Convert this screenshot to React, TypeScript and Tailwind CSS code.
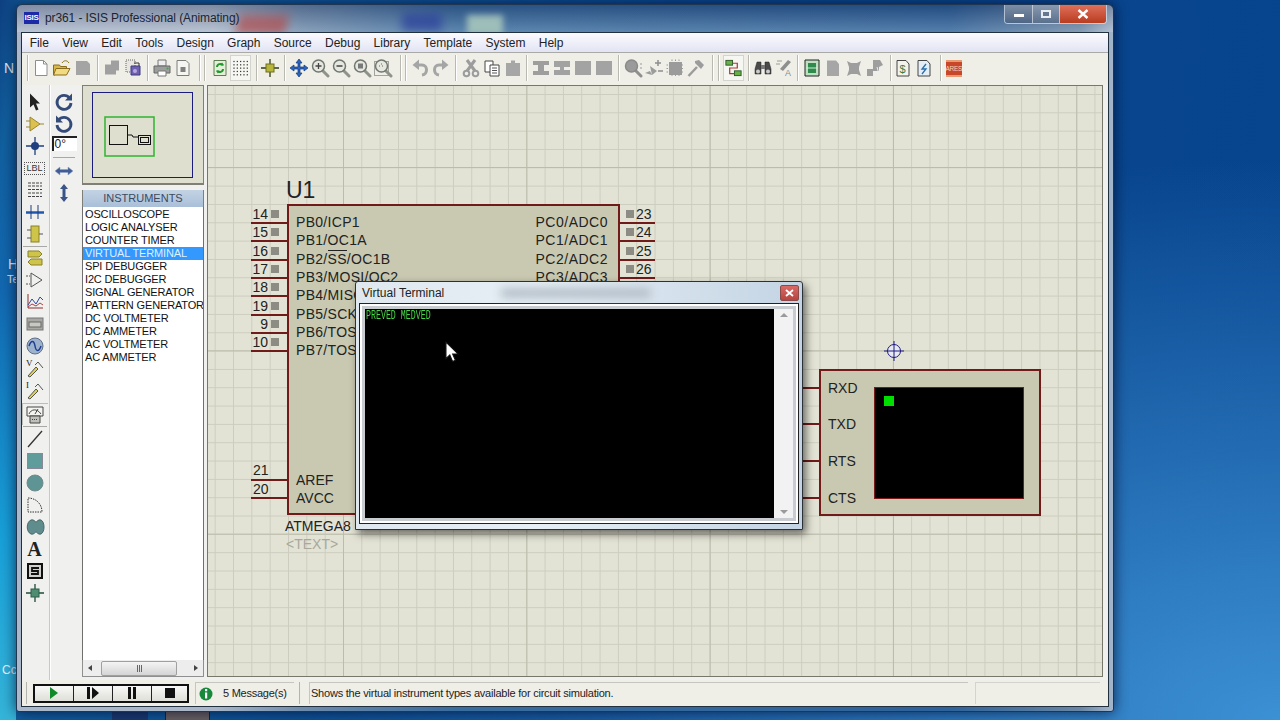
import React from "react";

const FONT = "[font-family:'Liberation_Sans',Arial,sans-serif]";

function Ic({ children, size = 20 }: { children: React.ReactNode; size?: number }) {
  return (
    <svg width={size} height={size} viewBox="0 0 20 20" className="block" fill="none">
      {children}
    </svg>
  );
}

function Mag({ inner, dotted, gray }: { inner?: React.ReactNode; dotted?: boolean; gray?: boolean }) {
  return (
    <Ic>
      {dotted && <rect x="1.5" y="3.5" width="14" height="14" stroke="#555" strokeDasharray="1 1" />}
      <line x1="12" y1="12" x2="18" y2="18" stroke={gray ? "#8f8f8f" : "#8e9488"} strokeWidth="3" strokeLinecap="round" />
      <circle cx="8.5" cy="8" r="6" fill={gray ? "#9a9a9a" : "#e6e8e0"} stroke={gray ? "#8a8a8a" : "#6f7770"} strokeWidth="1.5" />
      {inner}
    </Ic>
  );
}

const GrayDoc = () => (
  <Ic><path d="M3 3h11l3 3v11H3z" fill="#a4a4a4" /></Ic>
);

const Sep = ({ ml }: { ml: string }) => <div className={`${ml} w-[1px] h-[26px] bg-[#b9b9b2] shadow-[1px_0_0_#ffffff] shrink-0`} />;

const T = ({ children, sel }: { children: React.ReactNode; sel?: boolean }) => (
  <div className={`w-[21px] h-[26px] flex items-center justify-center shrink-0 ${sel ? "border border-[#d4d4ce] bg-[#f6f6f2]" : ""}`}>{children}</div>
);

const Group = ({ ml, children }: { ml: string; children: React.ReactNode }) => <div className={`flex ${ml}`}>{children}</div>;

function Toolbar() {
  return (
    <div className="h-[33px] flex items-center pb-[2px] bg-[#efefe8] border-t border-[#a9a9a6] shrink-0">
      <Sep ml="ml-[5px]" />
      <Group ml="ml-[2px]">
        <T><Ic><path d="M4.5 2.5h8l3.5 3.5v11.500h-11.500z" fill="#fff" stroke="#8d8d8d" /><path d="M12.500 2.500v3.500h3.500" stroke="#8d8d8d" /></Ic></T>
        <T><Ic><path d="M1.500 7h6l1 1.500h6v2H6l-3 6.500h-1.500z" fill="#d8b648" stroke="#8a6d1c" /><path d="M4 10.500h14l-3.500 6.500H1.500z" fill="#f2da80" stroke="#8a6d1c" /><path d="M10 5c2-3 5-3 7 0" stroke="#8a6d1c" /></Ic></T>
        <T><GrayDoc /></T>
      </Group>
      <Sep ml="ml-[4px]" />
      <Group ml="ml-[3px]">
        <T><Ic><path d="M9 2.500h8v10h-3v4H3v-10h6z" fill="#a0a0a0" /></Ic></T>
        <T><Ic><path d="M3 2h9v12H3z" fill="#e8e6e0" stroke="#666" strokeDasharray="1 1" /><path d="M8 8h9v9H8z" fill="#6e62b0" stroke="#3e3a7e" /><path d="M11 5h5v3" stroke="#333" /><circle cx="12" cy="13" r="2" fill="#b9a8e0" /></Ic></T>
      </Group>
      <Sep ml="ml-[4px]" />
      <Group ml="ml-[3px]">
        <T><Ic><path d="M6 2h8v6H6z" fill="#eee" stroke="#777" /><path d="M2 8h16v7H2z" fill="#9b9f9c" stroke="#666" /><path d="M6 13h8v5H6z" fill="#fff" stroke="#777" /><circle cx="15.500" cy="10.500" r="1" fill="#48a048" /></Ic></T>
        <T><Ic><path d="M4 2.500h9l3 3v12H4z" fill="#f5f5f1" stroke="#7c7c7c" /><rect x="7.500" y="9" width="5" height="5" fill="#808080" /></Ic></T>
      </Group>
      <Sep ml="ml-[6px]" />
      <Sep ml="ml-[4px]" />
      <Group ml="ml-[4px]">
        <T><Ic><path d="M4 2.500h12v15H4z" fill="#e4efd8" stroke="#5b7d4f" /><path d="M7 9c0-3 4-4 6-2M13 11c0 3-4 4-6 2" stroke="#1e9a2e" strokeWidth="2" /><path d="M12 4.500l2 3h-3.500zM8 15.500l-2-3h3.500z" fill="#1e9a2e" /></Ic></T>
        <T sel><Ic>{[3, 6.5, 10, 13.5, 17].flatMap((y) => [3, 6.5, 10, 13.5, 17].map((x) => <rect key={`${x}-${y}`} x={x - 0.5} y={y - 0.5} width="1.300" height="1.300" fill="#333" />))}</Ic></T>
      </Group>
      <Sep ml="ml-[5px]" />
      <Group ml="ml-[2px]">
        <T><Ic><path d="M10 1v18M1 10h18" stroke="#2f3d12" strokeWidth="1.300" /><rect x="6" y="6" width="8" height="8" fill="#b7b53a" stroke="#6f6f1e" /></Ic></T>
      </Group>
      <Sep ml="ml-[4px]" />
      <Group ml="ml-[3px]">
        <T><Ic><path d="M10 1l3 4h-2v4h4V7l4 3-4 3v-2h-4v4h2l-3 4-3-4h2v-4H5v2l-4-3 4-3v2h4V5H7z" fill="#2a62c0" stroke="#143a7a" strokeWidth="0.700" /></Ic></T>
        <T><Mag inner={<path d="M8.500 5v6M5.500 8h6" stroke="#444" strokeWidth="1.300" />} /></T>
        <T><Mag inner={<path d="M5.500 8h6" stroke="#444" strokeWidth="1.500" />} /></T>
        <T><Mag inner={<rect x="6" y="5.500" width="5" height="5" fill="#77797a" />} /></T>
        <T><Mag dotted inner={<path d="M6 8h1M9 8h1M8.500 5.500v1" stroke="#666" />} /></T>
      </Group>
      <Sep ml="ml-[7px]" />
      <Sep ml="ml-[4px]" />
      <Group ml="ml-[3px]">
        <T><Ic><path d="M6 7h6c6 0 6 9 0 10" stroke="#a5a5a5" strokeWidth="3" /><path d="M9 1.500L2.500 7 9 12z" fill="#a5a5a5" /></Ic></T>
        <T><Ic><path d="M14 7H8c-6 0-6 9 0 10" stroke="#a5a5a5" strokeWidth="3" /><path d="M11 1.500L17.500 7 11 12z" fill="#a5a5a5" /></Ic></T>
      </Group>
      <Sep ml="ml-[4px]" />
      <Group ml="ml-[4px]">
        <T><Ic><path d="M6 2l8 11M14 2L6 13" stroke="#9c9c9c" strokeWidth="3" /><circle cx="5.500" cy="15.500" r="2.800" stroke="#9c9c9c" strokeWidth="2" /><circle cx="14.500" cy="15.500" r="2.800" stroke="#9c9c9c" strokeWidth="2" /></Ic></T>
        <T><Ic><path d="M3 3h8v11H3z" fill="#fff" stroke="#444" /><path d="M8 7h9v11H8z" fill="#fff" stroke="#444" /><path d="M10 10h5M10 12.500h5M10 15h5" stroke="#555" /></Ic></T>
        <T><Ic><path d="M3 5h5V2.500h4V5h5v13H3z" fill="#a6a6a6" /></Ic></T>
      </Group>
      <Sep ml="ml-[3px]" />
      <Group ml="ml-[3px]">
        <T><Ic><path d="M2 3h16v4h-5v6h5v4H2v-4h5V7H2z" fill="#9e9e9e" /></Ic></T>
        <T><Ic><path d="M2 3h16v6H2zM8 9h4v3h6v5H2v-5h6z" fill="#a2a2a2" /></Ic></T>
        <T><Ic><rect x="2" y="3" width="16" height="14" fill="#a3a3a3" /></Ic></T>
        <T><Ic><rect x="2" y="3" width="16" height="14" fill="#a3a3a3" /></Ic></T>
      </Group>
      <Sep ml="ml-[4px]" />
      <Group ml="ml-[3px]">
        <T><Mag gray inner={<path d="M17 6h2M17 10h2" stroke="#999" />} /></T>
        <T><Ic><path d="M1 15l5-2 2 4zM6 8l7 5-5 4z" fill="#9c9c9c" /><path d="M14 2v6M11 5h6M14 13h5" stroke="#8f8f8f" strokeWidth="1.500" /></Ic></T>
        <T><Ic><rect x="4" y="4" width="13" height="13" fill="#9b9b9b" /><path d="M7 1.500v18M10.500 1.500v18M14 1.500v18M1.500 7h18M1.500 10.500h18M1.500 14h18" stroke="#9b9b9b" strokeDasharray="1.500 1.500" /></Ic></T>
        <T><Ic><path d="M2.500 18L11 9" stroke="#9c9c9c" strokeWidth="2.500" /><path d="M9 3l4-1 5 5-3 4-6-6z" fill="#9c9c9c" /></Ic></T>
      </Group>
      <Sep ml="ml-[6px]" />
      <Sep ml="ml-[5px]" />
      <Group ml="ml-[4px]">
        <T sel><Ic><rect x="2" y="2" width="7" height="5" fill="#68b048" stroke="#2e5a26" /><rect x="11" y="13" width="7" height="5" fill="#68b048" stroke="#2e5a26" /><path d="M9 5h5v5H6v6h5" stroke="#b03838" strokeWidth="1.300" /></Ic></T>
      </Group>
      <Sep ml="ml-[4px]" />
      <Group ml="ml-[3px]">
        <T><Ic><path d="M2 11l2-7h4v12H2zM12 4h4l2 7v5h-6z" fill="#4a4a4a" stroke="#222" strokeWidth="0.500" /><rect x="8" y="7" width="4" height="4" fill="#777" /><circle cx="5" cy="13.500" r="2" fill="#ccc" /><circle cx="15" cy="13.500" r="2" fill="#ccc" /></Ic></T>
        <T><Ic><path d="M3 3h5M2 6h4" stroke="#9a9a9a" /><path d="M14 2l3 2-8 9-3-2z" fill="#8e8e8e" /><text x="11" y="18" fontSize="9" fill="#8a8a8a" fontFamily="Liberation Sans">A</text></Ic></T>
      </Group>
      <Sep ml="ml-[3px]" />
      <Group ml="ml-[3px]">
        <T><Ic><path d="M3 2h14v16H3z" fill="#bfe0c0" stroke="#222" /><rect x="6" y="5" width="8" height="10" fill="#2f8a4e" /><path d="M4 10h12" stroke="#d0f0d0" /></Ic></T>
        <T><Ic><path d="M4 2.500h9l3 3.500v12H4z" fill="#a6a6a6" /></Ic></T>
        <T><Ic><path d="M3 3l4 2h6l4-2-2 6v3l2 6-4-2H7l-4 2 2-6V9z" fill="#9e9e9e" /></Ic></T>
        <T><Ic><path d="M8 2h7l3 5-4 2v4H8zM2 11h6v7H2z" fill="#9e9e9e" /><path d="M12 9l2 7 3-8" stroke="#eee" /></Ic></T>
      </Group>
      <Sep ml="ml-[5px]" />
      <Group ml="ml-[1px]">
        <T><Ic><path d="M4 2.500h9l3 3.500v12H4z" fill="#f3f3ec" stroke="#444" /><text x="6.500" y="15" fontSize="11" fill="#3d7a3d" fontFamily="Liberation Sans">$</text></Ic></T>
        <T><Ic><path d="M4 2.500h9l3 3.500v12H4z" fill="#e3eef6" stroke="#444" /><path d="M12 6l-4 5h4l-4 5" stroke="#2a6ea8" strokeWidth="1.300" /></Ic></T>
      </Group>
      <Sep ml="ml-[6px]" />
      <Group ml="ml-[2px]">
        <T>
          <div className={`w-[16px] h-[17px] bg-[#c8472a] border-y-2 border-[#e89a70] text-[#f7d2b4] text-[6.5px] leading-[13px] text-center overflow-hidden tracking-[-0.3px] ${FONT}`}>ARES</div>
        </T>
      </Group>
    </div>
  );
}

const LeftIcons: React.ReactNode[] = [
  <Ic key="a"><path d="M5 1.500v14l3.500-3 2.500 6 2.500-1-2.500-6H15z" fill="#222" /></Ic>,
  <Ic key="b"><path d="M5 3l10 7-10 7z" fill="#dcc050" stroke="#99872e" /><path d="M1 7h4M1 13h4M15 10h4" stroke="#99872e" /></Ic>,
  <Ic key="c"><path d="M10 1v18M1 10h18" stroke="#1f3f80" strokeWidth="1.300" /><circle cx="10" cy="10" r="4" fill="#1f3f80" /></Ic>,
  <div key="d" className={`w-[21px] h-[13px] border border-dotted border-[#555] text-[#333] text-[9px] leading-[11px] text-center ${FONT}`}>LBL</div>,
  <Ic key="e"><path d="M3 3h14M3 6h14M3 9.500h14M3 13h14M3 16.500h14" stroke="#444" strokeDasharray="3 1" /></Ic>,
  <Ic key="f"><path d="M1 10.500h18" stroke="#1f58b0" strokeWidth="2.500" /><path d="M6 3v14M13 3v14" stroke="#1f3f80" /></Ic>,
  <Ic key="g"><rect x="6" y="2" width="8" height="16" fill="#cfc44a" stroke="#8a8126" /><path d="M2 6h4M2 14h4M14 10h4" stroke="#555" /></Ic>,
  <Ic key="h"><path d="M3 3h11l3 3-3 3H3zM17 11H6l-3 3 3 3h11z" fill="#cfc44a" stroke="#8a8126" /></Ic>,
  <Ic key="i"><path d="M6 3l11 7-11 7z" stroke="#555" /><path d="M1 6h4M1 14h4" stroke="#555" strokeDasharray="2 1" /></Ic>,
  <Ic key="j"><path d="M3 2v14h15" stroke="#8a3030" /><path d="M3 13l4-6 4 5 4-7 3 3" stroke="#2a4aa0" /><path d="M3 15l4-3 4 2 4-3 3 2" stroke="#b04040" /></Ic>,
  <Ic key="k"><rect x="2" y="4" width="16" height="12" fill="#a8a8a4" stroke="#777" /><rect x="4" y="8" width="12" height="5" fill="#c8c8c0" stroke="#666" /></Ic>,
  <Ic key="l"><circle cx="10" cy="10" r="8" fill="#9db2cc" stroke="#5f6f86" /><path d="M4 10c2-6 5-6 6 0s4 6 6 0" stroke="#1f3f90" strokeWidth="1.500" /></Ic>,
  <Ic key="m"><text x="1" y="8" fontSize="9" fill="#222" fontFamily="Liberation Serif">V</text><path d="M3 18l8-9 2 2-8 8z" fill="#dcd060" stroke="#555" /><path d="M10 7l3-3 5 6" stroke="#555" /></Ic>,
  <Ic key="n"><text x="1" y="8" fontSize="9" fill="#222" fontFamily="Liberation Serif">I</text><path d="M3 18l8-9 2 2-8 8z" fill="#dcd060" stroke="#555" /><path d="M10 7l3-3 5 6" stroke="#555" /></Ic>,
  <Ic key="o"><path d="M2 2h16v9H2z" fill="#f4f4f0" stroke="#444" /><path d="M4 9c2-5 8-6 12 0M10 9l3-5" stroke="#444" /><path d="M5 11h10v7H5z" fill="#c0c0ba" stroke="#444" /><path d="M7 14.500h6" stroke="#444" strokeDasharray="1 1" /></Ic>,
];

const LeftIcons2: React.ReactNode[] = [
  <Ic key="a"><path d="M17 2L3 18" stroke="#333" strokeWidth="1.300" /></Ic>,
  <Ic key="b"><rect x="2.500" y="2.500" width="15" height="15" fill="#5f9c9c" stroke="#889" /></Ic>,
  <Ic key="c"><circle cx="10" cy="10" r="8" fill="#5f9494" stroke="#6f8a8a" /></Ic>,
  <Ic key="d"><path d="M3 3c8 0 14 6 14 14H3z" stroke="#333" strokeDasharray="1.500 1" /></Ic>,
  <Ic key="e"><path d="M6 3c3-1 4 2 5 2s2-3 5-2c4 2 4 12 0 14-3 1-4-2-5-2s-2 3-5 2c-5-2-5-12 0-14z" fill="#5f8c8c" stroke="#48696b" /></Ic>,
  <span key="f" className="text-[20px] font-bold text-[#222] leading-[20px] [font-family:'Liberation_Serif',serif]">A</span>,
  <Ic key="g"><rect x="3" y="3" width="14" height="14" fill="#d0d0cc" stroke="#111" strokeWidth="2" /><path d="M14 7H7v3h6v3H6" stroke="#111" strokeWidth="1.800" /></Ic>,
  <Ic key="h"><path d="M10 1v18M1 10h18" stroke="#1f4a3a" strokeWidth="1.300" /><rect x="6" y="6" width="8" height="8" fill="#4f8c70" stroke="#2c5f4c" /></Ic>,
];

function LeftBar() {
  return (
    <div className="w-[28px] shrink-0 flex flex-col items-center pt-[6px] pr-[2px] border-r border-[#c9c9c4] shadow-[1px_0_0_#fff]">
      {LeftIcons.map((ic, i) => (
        <React.Fragment key={i}>
          {i === 7 && <div className="w-[24px] h-[1px] bg-[#a8a8a4] mt-[1px] shrink-0" />}
          <div className={`w-[26px] h-[22px] flex items-center justify-center shrink-0 ${i === 14 ? "border-l border-t border-[#bdbdb8] mt-[2px]" : ""}`}>{ic}</div>
        </React.Fragment>
      ))}
      <div className="w-[24px] h-[1px] bg-[#a8a8a4] mt-[1px] mb-[1px] shrink-0" />
      {LeftIcons2.map((ic, i) => (
        <div key={i} className="w-[26px] h-[22px] flex items-center justify-center shrink-0">{ic}</div>
      ))}
    </div>
  );
}

function SecondBar() {
  return (
    <div className="w-[32px] shrink-0 flex flex-col items-center pt-[6px] pr-[5px] pl-[1px]">
      <div className="h-[22px] flex items-center"><Ic><path d="M15.500 6A7 7 0 1 0 17 11" stroke="#344a78" strokeWidth="2.800" /><path d="M18 1.500v7h-7z" fill="#344a78" /></Ic></div>
      <div className="h-[22px] flex items-center"><Ic><path d="M4.500 6A7 7 0 1 1 3 11" stroke="#344a78" strokeWidth="2.800" /><path d="M2 1.500v7h7z" fill="#344a78" /></Ic></div>
      <div className={`w-[25px] h-[15px] mt-[1px] bg-white border-l-2 border-t-2 border-[#222] text-[12px] leading-[12px] pl-[1px] text-[#222] ${FONT}`}>0°</div>
      <div className="w-[22px] h-[1px] bg-[#a8a8a4] mt-[6px] mb-[1px]" />
      <div className="h-[22px] mt-[1px] flex items-center"><Ic><path d="M1 10l5-4v2.500h8V6l5 4-5 4v-2.500H6V14z" fill="#3f5c94" stroke="#8ea0c4" strokeWidth="0.500" /></Ic></div>
      <div className="h-[22px] flex items-center"><Ic><path d="M10 1l4 5h-2.500v8H14l-4 5-4-5h2.500V6H6z" fill="#3a5488" /></Ic></div>
    </div>
  );
}

const instruments = ["OSCILLOSCOPE", "LOGIC ANALYSER", "COUNTER TIMER", "VIRTUAL TERMINAL", "SPI DEBUGGER", "I2C DEBUGGER", "SIGNAL GENERATOR", "PATTERN GENERATOR", "DC VOLTMETER", "DC AMMETER", "AC VOLTMETER", "AC AMMETER"];

function Panel() {
  return (
    <div className="w-[122px] shrink-0 flex flex-col pb-[3px]">
      <div className="h-[100px] bg-[#dedfcf] border border-[#7f7f78] border-b-2 pt-[6px] pl-[9px] shrink-0">
        <svg width="102" height="86" viewBox="0 0 102 86" className="block">
          <rect x="0.500" y="0.500" width="100" height="85" fill="none" stroke="#1a1a80" />
          <rect x="13" y="25" width="49" height="39" fill="none" stroke="#2fb52f" strokeWidth="1.500" />
          <rect x="17.500" y="33.500" width="18" height="19" fill="none" stroke="#111" />
          <path d="M36 43h4l1 2h5" stroke="#111" fill="none" />
          <rect x="46.500" y="43.500" width="12" height="9" fill="none" stroke="#111" />
          <rect x="48.500" y="45.500" width="8" height="5" fill="none" stroke="#111" />
        </svg>
      </div>
      <div className={`mt-[5px] h-[17px] shrink-0 bg-[linear-gradient(#c3d3e4,#a9bfd8)] border-x border-[#7f7f78] text-[11px] leading-[17px] text-center text-[#3c4a5c] ${FONT}`}>INSTRUMENTS</div>
      <div className={`flex-1 bg-white border-x border-[#6f6f6f] overflow-hidden text-[11px] leading-[13px] text-[#111] tracking-[-0.15px] ${FONT}`}>
        <div className="pt-[1px]">
          {instruments.map((s) => (
            <div key={s} className={`h-[13px] pl-[2px] whitespace-nowrap ${s === "VIRTUAL TERMINAL" ? "bg-[#3399ff] text-[#dff0ff]" : ""}`}>{s}</div>
          ))}
        </div>
      </div>
      <div className="h-[17px] shrink-0 bg-[#ededed] border-x border-b border-[#8f8f8f] flex items-center px-[5px]">
        <div className="w-0 h-0 border-y-[3.5px] border-y-transparent border-r-[4px] border-r-[#444]" />
        <div className="ml-[9px] w-[76px] h-[15px] bg-[linear-gradient(#f4f4f4,#d4d4d4)] border border-[#a0a0a0] rounded-[2px] flex items-center justify-center gap-[1px]">
          <div className="w-[1px] h-[7px] bg-[#666]" /><div className="w-[1px] h-[7px] bg-[#666]" /><div className="w-[1px] h-[7px] bg-[#666]" />
        </div>
        <div className="ml-auto w-0 h-0 border-y-[3.5px] border-y-transparent border-l-[4px] border-l-[#444]" />
      </div>
    </div>
  );
}

const leftPins = [["14", "PB0/ICP1"], ["15", "PB1/OC1A"], ["16", "PB2/"], ["17", "PB3/MOSI/OC2"], ["18", "PB4/MISO"], ["19", "PB5/SCK"], ["9", "PB6/TOSC1"], ["10", "PB7/TOSC2"]];
const rightPins = [["23", "PC0/ADC0"], ["24", "PC1/ADC1"], ["25", "PC2/ADC2"], ["26", "PC3/ADC3"]];
const wire = "absolute h-[2px] bg-[#701a1a]";
const sch = `absolute text-[14px] leading-[16px] text-[#222] whitespace-nowrap ${FONT}`;

function Canvas() {
  return (
    <div className="relative w-[896px] shrink-0 mb-[3px] ml-[3px] overflow-hidden border border-[#77776c] bg-[#e3e3d5] bg-[linear-gradient(to_right,#bcbcad_1px,transparent_1px),linear-gradient(to_bottom,#bcbcad_1px,transparent_1px),linear-gradient(to_right,#cdcdbf_1px,transparent_1px),linear-gradient(to_bottom,#cdcdbf_1px,transparent_1px)] bg-[length:183.33px_183.33px,183.33px_183.33px,18.33px_18.33px,18.33px_18.33px] bg-[position:135px_0,0_81px,6.7px_0,0_8px]">
      <div className={`absolute left-[78px] top-[90px] text-[23px] leading-[28px] text-[#222] ${FONT}`}>U1</div>
      <div className="absolute left-[79px] top-[118px] w-[333px] h-[311px] bg-[#c9c9b1] border-2 border-[#701a1a]" />
      {leftPins.map(([n, s], i) => {
        const y = 136 + Math.round(i * 18.33);
        return (
          <React.Fragment key={n}>
            <div className={wire} style={{ left: 43, top: y, width: 36 }} />
            <div className={`${sch} w-[18px] text-right`} style={{ left: 42, top: y - 16 }}>{n}</div>
            <div className="absolute w-[8px] h-[8px] bg-[#8c8c84]" style={{ left: 63, top: y - 12 }} />
            <div className={`${sch} tracking-[0.3px]`} style={{ left: 88, top: y - 8 }}>
              {i === 2 ? (<>PB2/<span className="border-t border-[#222]">SS</span>/OC1B</>) : s}
            </div>
          </React.Fragment>
        );
      })}
      {rightPins.map(([n, s], i) => {
        const y = 136 + Math.round(i * 18.33);
        return (
          <React.Fragment key={n}>
            <div className={wire} style={{ left: 411, top: y, width: 36 }} />
            <div className={sch} style={{ left: 428, top: y - 16 }}>{n}</div>
            <div className="absolute w-[8px] h-[8px] bg-[#8c8c84]" style={{ left: 418, top: y - 12 }} />
            <div className={`${sch} w-[90px] text-right tracking-[0.5px]`} style={{ left: 310, top: y - 8 }}>{s}</div>
          </React.Fragment>
        );
      })}
      <div className={wire} style={{ left: 43, top: 393, width: 36 }} />
      <div className={wire} style={{ left: 43, top: 411, width: 36 }} />
      <div className={sch} style={{ left: 45, top: 376 }}>21</div>
      <div className={sch} style={{ left: 45, top: 395 }}>20</div>
      <div className={sch} style={{ left: 88, top: 386 }}>AREF</div>
      <div className={sch} style={{ left: 88, top: 404 }}>AVCC</div>
      <div className={sch} style={{ left: 77, top: 432 }}>ATMEGA8</div>
      <div className={`${sch} text-[#a8a89c]!`} style={{ left: 78, top: 450 }}>&lt;TEXT&gt;</div>

      <svg width="22" height="22" viewBox="0 0 22 22" className="absolute left-[675px] top-[254px]">
        <circle cx="11" cy="11" r="6.5" fill="#e8e8f0" stroke="#1a1a80" />
        <path d="M11 1v20M1 11h20" stroke="#1a1a80" />
      </svg>
      <div className="absolute left-[611px] top-[283px] w-[222px] h-[147px] bg-[#c9c9b1] border-2 border-[#701a1a]" />
      {["RXD", "TXD", "RTS", "CTS"].map((s, i) => {
        const y = [301, 337, 374, 411][i];
        return (
          <React.Fragment key={s}>
            <div className={wire} style={{ left: 595, top: y, width: 16 }} />
            <div className={sch} style={{ left: 620, top: y - 7 }}>{s}</div>
          </React.Fragment>
        );
      })}
      <div className="absolute left-[666px] top-[301px] w-[150px] h-[112px] bg-black border border-[#7a1a1a]">
        <div className="ml-[9px] mt-[8px] w-[10px] h-[10px] bg-[#00e000]" />
      </div>
    </div>
  );
}

function StatusBar() {
  const btn = "w-[39px] border-r border-[#222] flex items-center justify-center";
  return (
    <div className={`h-[26px] shrink-0 flex items-center bg-[#efefe8] text-[12px] text-[#222] ${FONT}`}>
      <div className="ml-[4px] w-[1px] h-[22px] bg-[#b4b4ae]" />
      <div className="ml-[6px] flex h-[19px] border-2 border-[#111] bg-[linear-gradient(#f8f8f6,#dfdfd8)]">
        <div className={btn}><svg width="14" height="14" viewBox="0 0 14 14"><path d="M3 1l8 6-8 6z" fill="#108a28" /></svg></div>
        <div className={btn}><svg width="14" height="14" viewBox="0 0 14 14"><path d="M1 1h3v12H1zM6 1l7 6-7 6z" fill="#111" /></svg></div>
        <div className={btn}><svg width="14" height="14" viewBox="0 0 14 14"><path d="M3 1h3v12H3zM8 1h3v12H8z" fill="#111" /></svg></div>
        <div className="w-[35px] flex items-center justify-center"><svg width="14" height="14" viewBox="0 0 14 14"><rect x="2" y="2" width="10" height="10" fill="#111" /></svg></div>
      </div>
      <div className="ml-[6px] w-[99px] h-[22px] border-t border-l border-[#c6c6c0] flex items-center">
        <svg width="14" height="14" viewBox="0 0 14 14" className="ml-[3px]"><circle cx="7" cy="7" r="6.5" fill="#168a3a" /><rect x="6" y="2" width="2.200" height="2.200" fill="#fff" /><rect x="6" y="5.5" width="2.200" height="6" fill="#fff" /></svg>
        <span className="ml-[10px] text-[11px] whitespace-nowrap tracking-[-0.25px]">5 Message(s)</span>
      </div>
      <div className="ml-[5px] w-[1px] h-[22px] bg-[#b4b4ae]" />
      <div className="ml-[9px] w-[659px] h-[22px] border-t border-l border-[#c6c6c0] flex items-center pl-[1px] text-[11px] whitespace-nowrap tracking-[-0.22px]">Shows the virtual instrument types available for circuit simulation.</div>
      <div className="ml-[7px] w-[125px] h-[22px] border-t border-l border-[#d4d4ce]" />
    </div>
  );
}

function TitleBar() {
  return (
    <div className="relative h-[27px] shrink-0 overflow-hidden bg-[linear-gradient(rgba(0,10,50,0.25),rgba(255,255,255,0.18))]">
      <div className="absolute left-[220px] top-[10px] w-[50px] h-[20px] bg-[#b24a4a] opacity-70 blur-[5px] -skew-x-12" />
      <div className="absolute left-[385px] top-[8px] w-[40px] h-[18px] bg-[#2b3f9c] opacity-70 blur-[5px]" />
      <div className="absolute left-[450px] top-[10px] w-[36px] h-[20px] bg-[#a6c6bc] opacity-90 blur-[3px]" />
      <div className="relative flex items-center h-full pl-[7px] pb-[1px]">
        <div className={`w-[15px] h-[12px] bg-[#1c2aa8] text-white text-[8px] leading-[12px] text-center font-bold tracking-[-0.3px] ${FONT}`}>ISIS</div>
        <span className={`ml-[6px] text-[12px] text-[#1c2430] whitespace-nowrap tracking-[-0.1px] ${FONT}`}>pr361 - ISIS Professional (Animating)</span>
      </div>
      <div className="absolute right-[6px] top-0 flex h-[19px] border border-[#dfe6ef]/70 border-t-0 rounded-b-[4px] overflow-hidden">
        <div className="w-[28px] bg-[linear-gradient(#7d8ea6,#4e6684)] border-r border-[#dfe6ef]/70 flex items-center justify-center pt-[3px]"><div className="w-[10px] h-[3px] bg-white" /></div>
        <div className="w-[27px] bg-[linear-gradient(#8a9ab0,#5a708c)] border-r border-[#dfe6ef]/70 flex items-center justify-center"><div className="w-[10px] h-[8px] border-2 border-[#e8eef4] bg-[#66788f]" /></div>
        <div className="w-[46px] bg-[linear-gradient(#e0705a,#b83c20)] flex items-center justify-center">
          <svg width="12" height="10" viewBox="0 0 12 10"><path d="M1.5 1l9 8M10.5 1l-9 8" stroke="#fff" strokeWidth="2.400" /></svg>
        </div>
      </div>
    </div>
  );
}

function Terminal() {
  return (
    <div className={`absolute left-[355px] top-[281px] w-[448px] h-[249px] rounded-t-[3px] border border-[#2a3238] bg-[linear-gradient(90deg,#dfe8ee,#e6eff5_40%,#c4d4e4)] shadow-[3px_4px_8px_rgba(0,0,0,0.55)] flex flex-col ${FONT}`}>
      <div className="relative h-[22px] shrink-0 flex items-center pl-[6px] overflow-hidden">
        <div className="absolute left-[145px] top-[6px] w-[150px] h-[10px] bg-[#b4bec8] blur-[5px]" />
        <span className="relative text-[12px] text-[#222]">Virtual Terminal</span>
        <div className="absolute left-[424px] top-[3px] w-[19px] h-[16px] rounded-[2px] border border-[#8a4a48] bg-[linear-gradient(#d86a66,#b84340)] flex items-center justify-center">
          <svg width="9" height="8" viewBox="0 0 9 8"><path d="M1 1l7 6M8 1L1 7" stroke="#fff" strokeWidth="1.800" /></svg>
        </div>
      </div>
      <div className="mx-[4px] mb-[6px] flex-1 flex border-2 border-white outline outline-1 outline-[#222] p-[3px] bg-[#c8ccd0]">
        <div className="flex-1 bg-black pl-[1px] overflow-hidden">
          <div className="origin-left scale-x-[0.69] text-[12px] leading-[14px] text-[#46d846] whitespace-nowrap [font-family:'Liberation_Mono',monospace]">PREVED MEDVED</div>
        </div>
        <div className="w-[19px] bg-[#f2f2f2] flex flex-col items-center justify-between py-[4px]">
          <div className="w-0 h-0 border-x-[4px] border-x-transparent border-b-[4px] border-b-[#9a9a9a]" />
          <div className="w-0 h-0 border-x-[4px] border-x-transparent border-t-[4px] border-t-[#9a9a9a]" />
        </div>
      </div>
    </div>
  );
}

export default function App() {
  const menu = ["File", "View", "Edit", "Tools", "Design", "Graph", "Source", "Debug", "Library", "Template", "System", "Help"];
  return (
    <div className={`relative w-[1280px] h-[720px] overflow-hidden bg-[#0a478f] bg-[radial-gradient(ellipse_at_100%_100%,#3c90d4,transparent_55%),linear-gradient(100deg,#0e3f80_0%,#11609f_2%,#0a478f_50%,#07448e_100%)] ${FONT}`}>
      <div className="absolute left-0 top-0 w-[16px] h-[720px] bg-[linear-gradient(transparent_20%,#1268b0_40%,#18a0d8_75%,#35b4d8)]" />
      <div className="absolute left-[4px] top-[58px] text-[14px] text-[#dfe8f0]">N</div>
      <div className="absolute left-[8px] top-[254px] text-[14px] text-[#e8f2f8]">H</div>
      <div className="absolute left-[7px] top-[271px] text-[11px] text-[#e8f2f8]">Te</div>
      <div className="absolute left-[2px] top-[661px] text-[12px] text-[#e8f2f8]">Cc</div>
      <div className="absolute left-[112px] top-[710px] w-[36px] h-[12px] bg-[#1a3a70]" />
      <div className="absolute left-[165px] top-[710px] w-[45px] h-[12px] bg-[#6a6060] border border-[#222]" />

      <div className="absolute left-[16px] top-[4px] w-[1098px] h-[708px] rounded-t-[6px] rounded-b-[3px] border border-[#1f3550] bg-[linear-gradient(90deg,#aab8ca_0%,#a8b6c8_18%,#6f8cac_26%,#3a6c9e_40%,#2e629a_85%,#6a86a4_97%,#a4b6ca_100%)] shadow-[0_0_14px_rgba(0,10,40,0.75)] flex flex-col">
        <TitleBar />
        <div className="mx-[4px] mb-[4px] flex-1 min-h-0 flex flex-col border border-[#20303f] bg-[#efefea] overflow-hidden">
          <div className="h-[19px] shrink-0 flex items-center pl-[1px] bg-[linear-gradient(#fbfbfe,#e2e4f4)] text-[12px] text-[#222]">
            {menu.map((m) => (
              <span key={m} className="px-[6.64px] whitespace-nowrap">{m}</span>
            ))}
          </div>
          <Toolbar />
          <div className="flex-1 min-h-0 flex bg-[#f0f0ee]">
            <LeftBar />
            <SecondBar />
            <Panel />
            <Canvas />
          </div>
          <StatusBar />
        </div>
      </div>
      <Terminal />
      <svg width="16" height="22" viewBox="0 0 14 20" className="absolute left-[444px] top-[341px]">
        <path d="M1.5 1v15l3.5-3.300 2.500 6 2.600-1.100-2.500-5.800h4.900z" fill="#fff" stroke="#111" />
      </svg>
    </div>
  );
}
